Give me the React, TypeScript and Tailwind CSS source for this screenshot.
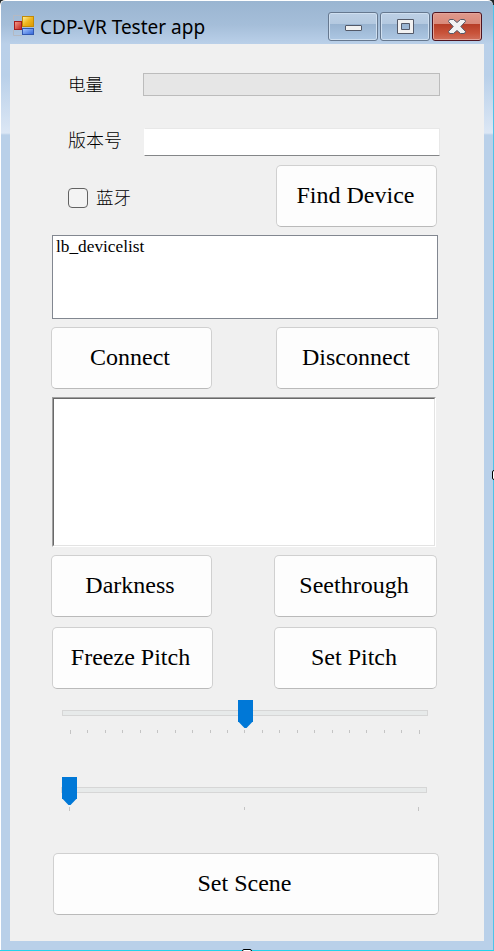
import type { ReactNode } from "react";

function PushButton({ className, children }: { className: string; children: ReactNode }) {
  return (
    <button
      type="button"
      className={`flex h-[62px] shrink-0 items-center justify-center rounded-[5px] border border-[#d0d0d0] border-b-[#bababa] bg-[#fdfdfd] pb-[2px] font-['Liberation_Serif',serif] text-[24px] leading-[28px] whitespace-nowrap text-black ${className}`}
    >
      {children}
    </button>
  );
}

function TrackBar({
  className,
  ticks,
  thumbClass,
  scaleClass,
}: {
  className: string;
  ticks: number;
  thumbClass: string;
  scaleClass: string;
}) {
  return (
    <div className={`relative h-[34px] w-[366px] shrink-0 ${className}`}>
      <div className="pt-[10px]">
        <div className="h-[6px] border border-[#d6d6d6] bg-[#e7eaea]" />
      </div>
      <div className={`mt-[14px] flex w-[350px] justify-between ${scaleClass}`}>
        {Array.from({ length: ticks }, (_, i) => (
          <span
            key={i}
            className={`w-px bg-[#c4c4c4] ${i === 0 || i === ticks - 1 ? "h-[4px]" : "h-[3px]"}`}
          />
        ))}
      </div>
      <div
        className={`absolute top-0 h-[28px] w-[15px] bg-[#0078d7] [clip-path:polygon(0_0,100%_0,100%_76%,57%_100%,43%_100%,0_76%)] ${thumbClass}`}
      />
    </div>
  );
}

const captionButton =
  "flex h-[29px] w-[50px] items-center justify-center rounded-[3px] border border-[#66788f] bg-[linear-gradient(#bdd0e5_0%,#b4c9e0_40%,#98b3d0_41%,#adc7e3_100%)] shadow-[inset_0_0_0_1px_#cfdff0]";

export default function App() {
  return (
    <div className="relative flex h-[951px] w-[494px] flex-col overflow-hidden bg-[#202628] font-['Noto_Sans','Noto_Sans_CJK_SC',sans-serif]">
      <div className="flex h-[950px] w-[493px] flex-col rounded-t-[5px] border-t border-l border-white bg-[linear-gradient(#9ab5d1_0px,#a5bed9_24px,#bad0e9_43px,#b9d0e9_75px,#dce7f5_132px,#b9d0e9_134px)] pr-[9px] pb-[9px] pl-[9px]">
        <header className="flex h-[43px] shrink-0 items-start">
          <svg className="mt-[14px] ml-[3px] shrink-0" width="22" height="21" viewBox="0 0 22 21">
            <defs>
              <linearGradient id="gold" x1="0" y1="0" x2="1" y2="1">
                <stop offset="0" stopColor="#fff3a0" />
                <stop offset=".5" stopColor="#efb51d" />
                <stop offset="1" stopColor="#d99600" />
              </linearGradient>
              <linearGradient id="red" x1="0" y1="0" x2="1" y2="1">
                <stop offset="0" stopColor="#f7a08c" />
                <stop offset="1" stopColor="#bf1e1c" />
              </linearGradient>
              <linearGradient id="blue" x1="0" y1="0" x2="1" y2="1">
                <stop offset="0" stopColor="#a9cbff" />
                <stop offset="1" stopColor="#2f62d8" />
              </linearGradient>
            </defs>
            <path d="M.5 6V.5H9M.5 15v5.500H9" fill="none" stroke="#b4b9c2" />
            <rect x="9.500" y="1.500" width="11" height="10" fill="url(#gold)" stroke="#c38a05" />
            <rect x="1.500" y="6.500" width="7" height="8" fill="url(#red)" stroke="#a51d1d" />
            <rect x="9.500" y="13.500" width="11" height="6" fill="url(#blue)" stroke="#3158b0" />
          </svg>
          <h1 className="mt-[12px] ml-[5px] text-[19px] leading-[28px] font-normal whitespace-nowrap text-black">
            CDP-VR Tester app
          </h1>
          <div className="mt-[11px] mr-[2px] ml-auto flex gap-[2px]">
            <button type="button" aria-label="Minimize" className={captionButton}>
              <svg width="17" height="7" viewBox="0 0 17 7" className="mt-[4px]">
                <rect x=".5" y=".5" width="16" height="5" rx=".5" fill="#f1f1f1" stroke="#535968" />
              </svg>
            </button>
            <button type="button" aria-label="Maximize" className={captionButton}>
              <svg width="17" height="15" viewBox="0 0 17 15">
                <path
                  d="M.5.5h16v14H.5zM4.500 4.500v6h8v-6z"
                  fill="#f1f1f1"
                  fillRule="evenodd"
                  stroke="#535968"
                />
              </svg>
            </button>
            <button
              type="button"
              aria-label="Close"
              className="flex h-[29px] w-[50px] items-center justify-center rounded-[3px] border border-[#4e1420] bg-[linear-gradient(#e0998c_0%,#d98a7b_40%,#b63d27_41%,#c9543b_75%,#d0705c_100%)] shadow-[inset_0_0_0_1px_#e3a59a]"
            >
              <svg width="18" height="15" viewBox="0 0 18 15">
                <path
                  d="M1.500.5h4L9 3.500 12.500.5h4L17.500 2.500 12.800 7.500l4.700 5-1 2h-4L9 11.500l-3.500 3h-4l-1-2 4.700-5L.5 2.500z"
                  fill="#f3f3f3"
                  stroke="#535968"
                />
              </svg>
            </button>
          </div>
        </header>

        <main className="flex min-h-0 w-[474px] flex-1 flex-col bg-[#f0f0f0]">
          <div className="mt-[29px] ml-[58px] flex h-[23px] shrink-0 items-center">
            <span className="w-[75px] text-[17.500px] leading-[23px] font-light text-black">电量</span>
            <div className="h-[23px] w-[297px] border border-[#bcbcbc] bg-[#e6e6e6]" />
          </div>

          <div className="mt-[32px] ml-[58px] flex h-[28px] shrink-0">
            <span className="w-[76px] text-[18px] leading-[24px] font-light text-black">版本号</span>
            <input
              readOnly
              aria-label="版本号"
              className="h-[28px] w-[296px] rounded-[1px] border border-[#e8e8e8] border-b-[#848688] border-l-white bg-white outline-none"
            />
          </div>

          <div className="mt-[9px] ml-[58px] flex h-[62px] shrink-0 items-start">
            <label className="mt-[23px] flex h-[20px] w-[208px] items-center text-[17.500px] leading-[20px] font-light text-black">
              <span className="mr-[8px] size-[20px] rounded-[4px] border border-[#626262] bg-[#f3f3f3]" />
              <span className="pb-[2px]">蓝牙</span>
            </label>
            <PushButton className="w-[161px] pr-[2px]">Find Device</PushButton>
          </div>

          <div className="mt-[8px] ml-[42px] h-[84px] w-[386px] shrink-0 border border-[#828790] bg-white pt-px pl-[3px] font-['Liberation_Serif',serif] text-[17.300px] leading-[20px] text-black">
            lb_devicelist
          </div>

          <div className="mt-[8px] ml-[41px] flex shrink-0 gap-[64px]">
            <PushButton className="w-[161px] pr-[3px]">Connect</PushButton>
            <PushButton className="w-[163px] pr-[3px]">Disconnect</PushButton>
          </div>

          <div className="mt-[8px] ml-[42px] h-[150px] w-[384px] shrink-0 border border-t-[#a0a0a0] border-r-white border-b-white border-l-[#a0a0a0]">
            <div className="h-full border border-t-[#696969] border-r-[#e3e3e3] border-b-[#e3e3e3] border-l-[#696969] bg-white" />
          </div>

          <div className="mt-[8px] ml-[41px] flex shrink-0 gap-[62px]">
            <PushButton className="w-[161px] pr-[3px]">Darkness</PushButton>
            <PushButton className="w-[163px] pr-[3px]">Seethrough</PushButton>
          </div>

          <div className="mt-[10px] ml-[42px] flex shrink-0 gap-[61px]">
            <PushButton className="w-[161px] pr-[4px]">Freeze Pitch</PushButton>
            <PushButton className="w-[163px] pr-[3px]">Set Pitch</PushButton>
          </div>

          <TrackBar className="mt-[11px] ml-[52px]" ticks={21} scaleClass="ml-[8px]" thumbClass="left-[176px]" />
          <TrackBar className="mt-[43px] ml-[51px]" ticks={3} scaleClass="ml-[8px]" thumbClass="left-px" />

          <PushButton className="mt-[42px] ml-[43px] w-[386px] pr-[3px]">Set Scene</PushButton>
        </main>
      </div>

      <div className="absolute top-[5px] right-0 h-[946px] w-px bg-[#4fc3e8]" />
      <div className="absolute bottom-0 left-0 h-px w-full bg-[#22d3ea]" />
      <div className="absolute top-[470px] left-[492px] h-[10px] w-[10px] rounded-[2px] border border-black bg-white" />
      <div className="absolute top-[949px] left-[242px] h-[10px] w-[10px] rounded-[2px] border border-black bg-white" />
    </div>
  );
}
